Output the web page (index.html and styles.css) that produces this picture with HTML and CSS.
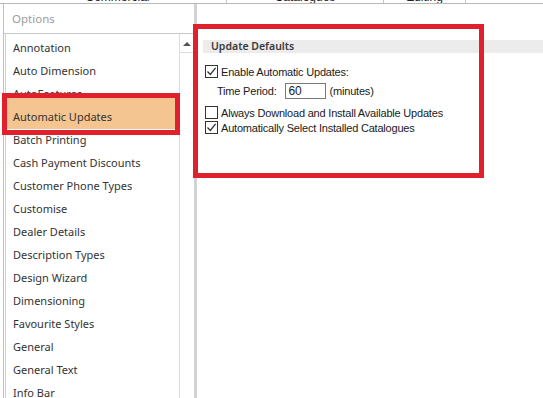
FILE: index.html
```html
<!DOCTYPE html>
<html lang="en">

<head>
    <meta charset="UTF-8">
    <title>Options</title>
    <link rel="stylesheet" href="styles.css">
</head>

<body>
    <div class="topbar">
        <div class="col col-first">Commercial</div>
        <div class="col col-second">Catalogues</div>
        <div class="col col-third">Editing</div>
        <div class="col col-last"></div>
    </div>

    <div class="dialog">
        <div class="side">
            <div class="title">Options</div>
            <div class="nav">
                <ul class="list">
                    <li>Annotation</li>
                    <li>Auto Dimension</li>
                    <li>AutoFeatures</li>
                    <li class="selected">Automatic Updates</li>
                    <li>Batch Printing</li>
                    <li>Cash Payment Discounts</li>
                    <li>Customer Phone Types</li>
                    <li>Customise</li>
                    <li>Dealer Details</li>
                    <li>Description Types</li>
                    <li>Design Wizard</li>
                    <li>Dimensioning</li>
                    <li>Favourite Styles</li>
                    <li>General</li>
                    <li>General Text</li>
                    <li>Info Bar</li>
                </ul>
                <div class="scroll">
                    <div class="scroll-up"><span class="arrow"></span></div>
                </div>
            </div>
        </div>

        <div class="panel">
            <div class="section-head">Update Defaults</div>

            <div class="check-row first">
                <span class="box">
                    <svg width="11" height="11" viewBox="0 0 11 11"><path d="M1.5 5.5 L4.3 8.5 L9.6 1.8" fill="none" stroke="#333" stroke-width="1.3"/></svg>
                </span>
                Enable Automatic Updates:
            </div>

            <div class="period">
                <span>Time Period:</span>
                <span class="field">60</span>
                <span>(minutes)</span>
            </div>

            <div class="check-row third">
                <span class="box"></span>
                Always Download and Install Available Updates
            </div>

            <div class="check-row fourth">
                <span class="box">
                    <svg width="11" height="11" viewBox="0 0 11 11"><path d="M1.5 5.5 L4.3 8.5 L9.6 1.8" fill="none" stroke="#333" stroke-width="1.3"/></svg>
                </span>
                Automatically Select Installed Catalogues
            </div>
        </div>

        <!-- red highlight marks drawn over the screenshot -->
        <div class="mark mark-list"></div>
        <div class="mark mark-panel"></div>
    </div>
</body>

</html>
```

FILE: styles.css
```css
body {
    margin: 0;
    padding: 0;
    background-color: #fff;
    font-family: "Noto Sans", Arial, sans-serif;
    width: 543px;
    height: 398px;
    overflow: hidden;
}

.topbar {
    display: flex;
    height: 3px;
    border-bottom: 1px solid #b9b9b9;
    overflow: hidden;
    padding-left: 9px;
}

.col {
    border-left: 1px solid #c4c4c4;
    text-align: center;
    font-family: "Liberation Sans", Arial, sans-serif;
    font-size: 12px;
    line-height: 12px;
    margin-top: -9px;
    color: #222;
    box-sizing: border-box;
}

.col-first {
    width: 217px;
    border-left: none;
}

.col-second {
    width: 157px;
}

.col-third {
    width: 82px;
}

.col-last {
    flex: 1;
}

.dialog {
    position: relative;
    display: flex;
    margin-left: 3px;
    height: 394px;
    border-left: 1px solid #c0c0c0;
}

.side {
    width: 190px;
    display: flex;
    flex-direction: column;
    border-right: 3px solid #d2d2d2;
}

.title {
    height: 29px;
    line-height: 29px;
    padding-left: 8px;
    font-size: 11.5px;
    color: #9c9c9c;
    border-bottom: 1px solid #c8c8c8;
}

.nav {
    flex: 1;
    display: flex;
}

.list {
    list-style: none;
    margin: 0 0 0 1px;
    padding: 2px 0 0 0;
    width: 173px;
    border-left: 1px solid #d0d0d0;
    border-right: 1px solid #dcdcdc;
}

.list li {
    height: 23px;
    line-height: 23px;
    padding-left: 7px;
    font-size: 11px;
    color: #333;
    white-space: nowrap;
}

.list li.selected {
    background-color: #f4c591;
    box-shadow: 0 -8px 0 #f4c591, 0 1px 0 #f4c591;
}

.scroll {
    flex: 1;
}

.scroll-up {
    height: 16px;
    margin-top: 2px;
    border-bottom: 1px solid #dcdcdc;
    display: flex;
    justify-content: center;
    align-items: center;
}

.arrow {
    width: 0;
    height: 0;
    border-left: 4px solid transparent;
    border-right: 4px solid transparent;
    border-bottom: 4px solid #555;
}

.panel {
    flex: 1;
    padding: 36px 0 0 6px;
    font-family: "Liberation Sans", Arial, sans-serif;
    font-size: 11px;
    letter-spacing: -0.2px;
    color: #1a1a1a;
}

.section-head {
    height: 13px;
    line-height: 13px;
    background-color: #ececec;
    padding-left: 8px;
    font-family: "Noto Sans", Arial, sans-serif;
    font-weight: 600;
    font-size: 10.5px;
    letter-spacing: 0;
    color: #3a3a3a;
}

.check-row {
    display: flex;
    align-items: center;
    height: 13px;
    margin-left: 2px;
    white-space: nowrap;
}

.check-row.first {
    margin-top: 12px;
}

.check-row.third {
    margin-top: 7px;
}

.check-row.fourth {
    margin-top: 2px;
}

.box {
    width: 11px;
    height: 11px;
    border: 1px solid #333;
    margin-right: 3px;
    background: #fff;
    display: flex;
}

.period {
    display: flex;
    align-items: center;
    height: 16px;
    margin-top: 5px;
    padding-left: 14px;
    white-space: nowrap;
}

.field {
    width: 36px;
    height: 14px;
    line-height: 15px;
    border: 1px solid #7a7a7a;
    padding-left: 3px;
    margin: 0 4px 0 8px;
    font-size: 12px;
}

.mark {
    position: absolute;
    border: 5px solid #e0212d;
    box-sizing: border-box;
}

.mark-list {
    left: -2px;
    top: 89px;
    width: 178px;
    height: 42px;
}

.mark-panel {
    left: 189px;
    top: 20px;
    width: 291px;
    height: 154px;
}
```
